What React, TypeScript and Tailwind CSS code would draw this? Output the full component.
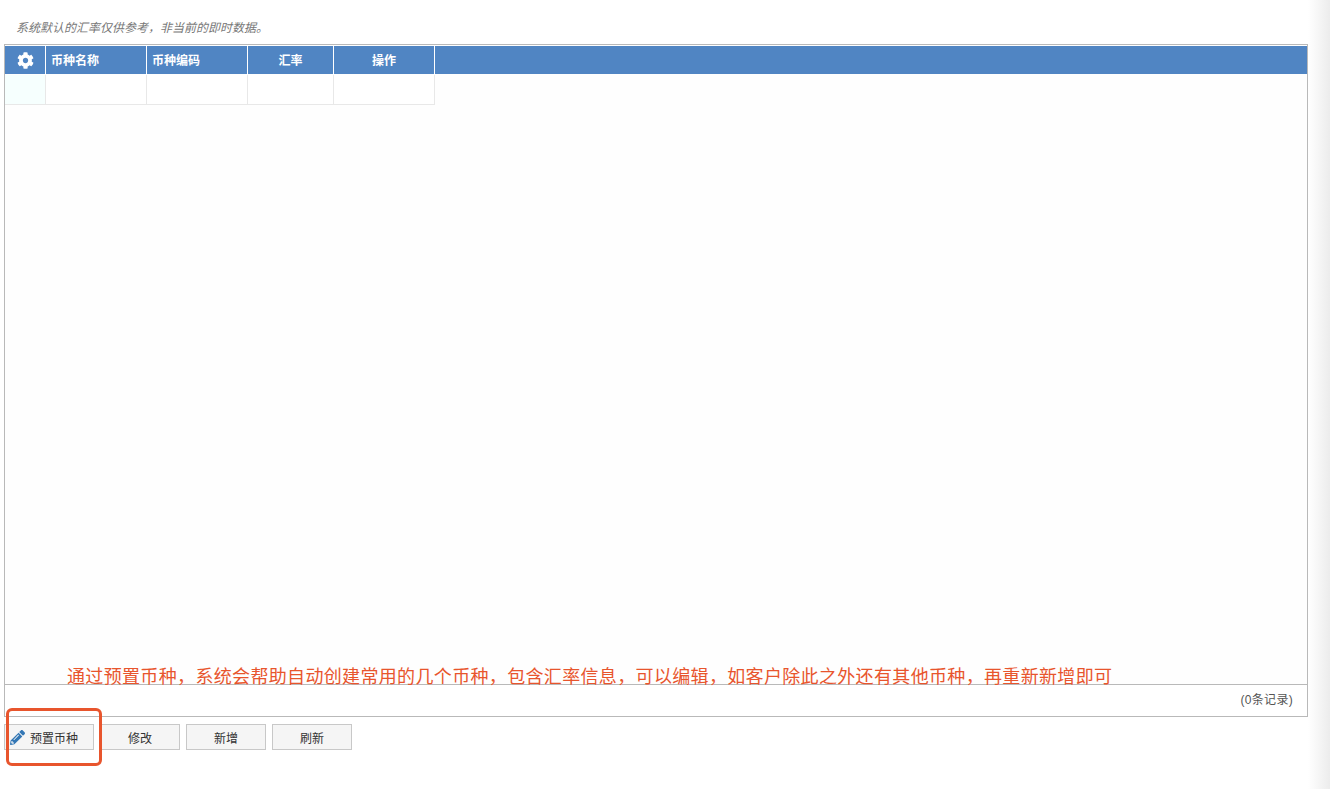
import { FaCog, FaPencilAlt } from "react-icons/fa";

const COLUMNS = [
  { label: "币种名称", width: "w-[101px]", align: "pl-[5px] text-left" },
  { label: "币种编码", width: "w-[101px]", align: "pl-[5px] text-left" },
  { label: "汇率", width: "w-[86px]", align: "text-center" },
  { label: "操作", width: "w-[101px]", align: "text-center" },
];

const BUTTONS = ["修改", "新增", "刷新"];

const font = "font-['Liberation_Sans','Noto_Sans_CJK_SC',sans-serif]";

export default function App() {
  return (
    <div className={`relative flex h-[789px] w-full overflow-hidden bg-white ${font}`}>
      <div className="w-[1308px] shrink-0 pl-[4px]">
        <p className="h-[44px] pl-[12px] pt-[20px] text-[12px] leading-[16px] italic text-[#777777]">
          系统默认的汇率仅供参考，非当前的即时数据。
        </p>

        <div className="flex h-[673px] flex-col border border-[#b9b9b9] bg-[#fefefe]">
          <div className="mt-px flex h-[28px] shrink-0 bg-[#5085c3] text-[12px] font-bold text-white">
            <div className="flex w-[41px] items-center justify-center border-r border-white">
              <FaCog size={17} color="#ffffff" />
            </div>
            {COLUMNS.map((col) => (
              <div
                key={col.label}
                className={`${col.width} ${col.align} border-r border-white pt-px leading-[28px]`}
              >
                {col.label}
              </div>
            ))}
          </div>

          <div className="mt-px flex h-[30px] w-[430px] shrink-0 border-b border-[#e8e8e8]">
            <div className="w-[41px] border-r border-[#e8e8e8] bg-[#f6fffe]" />
            {COLUMNS.map((col) => (
              <div key={col.label} className={`${col.width} border-r border-[#e8e8e8] bg-white`} />
            ))}
          </div>

          <div className="flex-1" />

          <div className="h-[32px] shrink-0 border-t border-[#b9b9b9] bg-white pr-[14px] pt-[7px] text-right text-[12px] leading-[16px] tracking-[0.3px] text-[#555555]">
            (0条记录)
          </div>
        </div>

        <div className="mt-[7px] flex gap-[6px]">
          <button className="flex h-[26px] w-[90px] items-center border border-[#c8c8c8] bg-[#f5f5f5] pl-[5px] text-[12px] text-[#333333]">
            <FaPencilAlt size={15} color="#3377b5" />
            <span className="ml-[5px] pt-[3px]">预置币种</span>
          </button>
          {BUTTONS.map((label) => (
            <button
              key={label}
              className="h-[26px] w-[80px] border border-[#c8c8c8] bg-[#f5f5f5] pt-[3px] text-[12px] text-[#333333]"
            >
              {label}
            </button>
          ))}
        </div>
      </div>

      <div className="flex-1 bg-gradient-to-r from-white to-[#ececec]" />

      {/* annotations drawn over the screenshot */}
      <div className="absolute left-[67px] top-[664px] whitespace-nowrap text-[18px] leading-[26px] tracking-[0.34px] text-[#e8552d]">
        通过预置币种，系统会帮助自动创建常用的几个币种，包含汇率信息，可以编辑，如客户除此之外还有其他币种，再重新新增即可
      </div>
      <div className="absolute left-[6px] top-[708px] h-[58px] w-[96px] rounded-[6px] border-[3px] border-[#e8552d]" />
    </div>
  );
}
